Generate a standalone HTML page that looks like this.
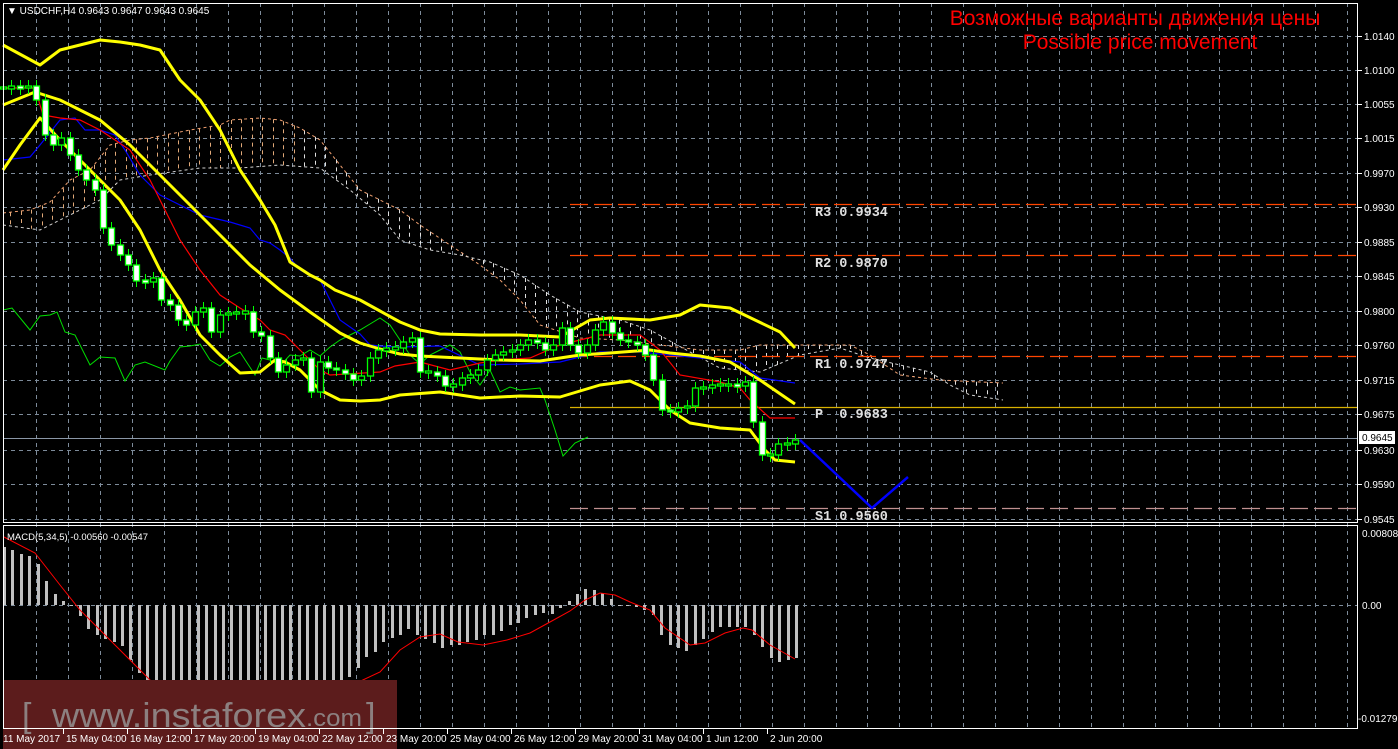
<!DOCTYPE html>
<html><head><meta charset="utf-8"><style>
html,body{margin:0;padding:0;background:#000;width:1398px;height:749px;overflow:hidden}
svg{display:block}
text{font-family:"Liberation Sans","DejaVu Sans",sans-serif}
</style></head><body>
<svg id="s" width="1398" height="749" xmlns="http://www.w3.org/2000/svg">
<rect width="1398" height="749" fill="#000"/>
<g id="grid"></g>
<g id="cloud"></g>
<g id="piv"></g>
<g id="lines"></g>
<g id="candles"></g>
<g id="macd"></g>
<g id="wm">
<rect x="3" y="680" width="394" height="69" fill="#5c1c1c"/>
<text x="22" y="727" font-size="34" fill="#8c8080">[</text>
<text x="52" y="727" font-size="34" fill="#8c8080" textLength="254" lengthAdjust="spacingAndGlyphs">www.instaforex</text>
<text x="306" y="726" font-size="24" fill="#8c8080" textLength="56" lengthAdjust="spacingAndGlyphs">.com</text>
<text x="366" y="727" font-size="34" fill="#8c8080">]</text>
</g>
<g id="fg"></g>
</svg>
<script>
var NS="http://www.w3.org/2000/svg";
function el(g,tag,a,txt){var e=document.createElementNS(NS,tag);for(var k in a)e.setAttribute(k,a[k]);if(txt!=null)e.textContent=txt;document.getElementById(g).appendChild(e);return e;}
function pts(a){return a.map(function(p){return p[0]+","+p[1]}).join(" ");}
var gc="#7d8b9a";
for(var x=36;x<1358;x+=31.98){el("grid","line",{x1:Math.round(x)+.5,y1:3,x2:Math.round(x)+.5,y2:729,stroke:gc,"stroke-dasharray":"4,4"});}
var hy=[36,70,104,138,173,207,242,276,311,345,380,414,450,484,519];
hy.forEach(function(y){el("grid","line",{x1:3,y1:y+.5,x2:1358,y2:y+.5,stroke:gc,"stroke-dasharray":"4,4"});});
el("grid","line",{x1:3,y1:605.5,x2:1358,y2:605.5,stroke:gc,"stroke-dasharray":"4,4"});
var up=[[3,213],[30,210],[50,202],[70,180],[90,170],[110,145],[130,140],[150,138],[165,135],[190,130],[220,125],[230,120],[260,118],[280,120],[300,128],[320,140],[340,165],[360,190],[380,200],[400,210],[420,225],[450,245],[480,265],[500,280],[520,300],[540,325],[580,338],[620,340],[660,345],[700,350],[740,350],[760,345],[800,345],[850,345],[870,355],[900,375],[940,380],[980,382],[1003,383]];
var lo=[[3,225],[40,230],[60,220],[80,210],[100,200],[120,180],[150,175],[200,168],[240,168],[280,165],[320,168],[350,190],[380,215],[400,240],[430,250],[460,255],[490,262],[520,275],[550,295],[580,312],[620,320],[650,330],[690,352],[720,368],[760,372],[800,355],[840,348],[870,358],[900,365],[930,372],[950,385],[970,395],[1003,400]];
function interp(a,x){for(var i=0;i<a.length-1;i++){if(x>=a[i][0]&&x<=a[i+1][0]){var t=(x-a[i][0])/(a[i+1][0]-a[i][0]);return a[i][1]+t*(a[i+1][1]-a[i][1]);}}return a[a.length-1][1];}
for(var x=10;x<1003;x+=10.5){var a=interp(up,x),b=interp(lo,x);el("cloud","line",{x1:Math.round(x)+.5,y1:Math.min(a,b),x2:Math.round(x)+.5,y2:Math.max(a,b),stroke:(x<300?"#e0a878":"#e0e0e0"),"stroke-dasharray":"4,4","stroke-width":1});}
el("cloud","polyline",{points:pts(up),fill:"none",stroke:"#f0a070","stroke-dasharray":"3,3"});
el("cloud","polyline",{points:pts(lo),fill:"none",stroke:"#d0d0d0","stroke-dasharray":"3,3"});
function pl(y,c,d){el("piv","line",{x1:570,y1:y+.5,x2:1358,y2:y+.5,stroke:c,"stroke-width":1.3,"stroke-dasharray":d});}
pl(204,"#ff4500","18,6");pl(255,"#ff4500","18,6");pl(356,"#ff4500","18,6");pl(407,"#d8b000","");pl(508,"#c09090","18,6");
el("piv","line",{x1:3,y1:438.5,x2:1358,y2:438.5,stroke:"#8a96a6"});
var lb=[["R3 0.9934",216],["R2 0.9870",267],["R1 0.9747",368],["P  0.9683",418],["S1 0.9560",520]];
lb.forEach(function(l){el("piv","text",{x:815,y:l[1],"xml:space":"preserve",style:"font-family:'Liberation Mono',monospace;font-size:13.5px;font-weight:bold;fill:#e0e0e0;white-space:pre"},l[0]);});
var ub=[[3,45],[40,65],[60,50],[100,40],[120,42],[140,45],[160,50],[180,80],[200,100],[220,130],[240,170],[260,200],[275,225],[290,262],[310,275],[320,280],[335,290],[360,300],[380,311],[400,322],[420,330],[440,334],[480,335],[520,335],[560,337],[590,320],[610,318],[650,320],[680,315],[700,305],[730,308],[755,320],[780,332],[795,348]];
var mb=[[3,105],[35,92],[60,100],[80,110],[100,120],[130,145],[160,175],[190,205],[220,235],[250,265],[280,290],[310,312],[340,333],[360,343],[380,349],[400,354],[420,356],[460,358],[500,360],[540,361],[580,355],[610,353],[650,350],[670,353],[700,356],[730,362],[760,380],[795,404]];
var lb2=[[3,170],[20,145],[40,118],[60,140],[80,160],[100,180],[120,200],[140,230],[160,270],[180,300],[200,335],[220,355],[240,373],[260,372],[275,360],[285,362],[300,370],[320,390],[340,400],[360,401],[380,400],[400,395],[440,392],[480,398],[520,396],[560,397],[600,385],[630,381],[650,390],[670,410],[690,423],[720,428],[750,430],[765,450],[775,460],[795,462]];
var red=[[3,88],[35,88],[43,115],[60,118],[80,120],[100,130],[130,150],[150,180],[170,220],[180,240],[200,270],[220,295],[240,308],[260,320],[270,330],[285,335],[300,350],[310,360],[320,370],[330,375],[380,372],[395,366],[420,362],[450,370],[480,363],[500,360],[530,358],[560,345],[580,340],[600,335],[640,335],[660,350],[680,375],[720,382],[740,388],[750,400],[770,418],[795,418]];
var blue=[[3,160],[30,157],[40,145],[60,120],[75,118],[85,130],[100,130],[115,135],[125,150],[140,175],[160,195],[180,205],[200,215],[230,222],[250,228],[260,240],[270,243],[280,250],[290,258],[300,270],[320,280],[340,320],[360,334],[370,345],[380,346],[400,347],[440,346],[480,365],[520,364],[560,362],[600,352],[640,352],[660,354],[690,357],[740,362],[760,378],[795,383]];
var grn=[[3,310],[12,308],[30,330],[40,316],[50,315],[57,312],[65,332],[75,335],[90,365],[100,357],[115,358],[125,381],[135,365],[145,362],[165,370],[170,361],[180,347],[190,346],[200,344],[210,360],[220,366],[230,357],[240,352],[255,375],[262,358],[270,360],[280,366],[290,355],[300,356],[310,350],[320,356],[330,347],[340,340],[350,335],[360,330],[370,324],[380,318],[390,325],[400,340],[410,355],[420,364],[430,355],[440,350],[450,345],[460,352],[470,372],[480,385],[490,370],[500,392],[510,387],[520,390],[540,388],[545,400],[555,430],[563,456],[575,443],[588,437]];
el("lines","polyline",{points:pts(grn),fill:"none",stroke:"#00e000","stroke-width":1});
el("lines","polyline",{points:pts(blue),fill:"none",stroke:"#0000ff","stroke-width":1.2});
el("lines","polyline",{points:pts(red),fill:"none",stroke:"#ff0000","stroke-width":1.2});
[ub,mb,lb2].forEach(function(a){el("lines","polyline",{points:pts(a),fill:"none",stroke:"#ffff00","stroke-width":3,"stroke-linejoin":"round"});});
el("lines","polyline",{points:"800,440 872,508 908,477",fill:"none",stroke:"#0000ff","stroke-width":2.5});
var cl=[88,87,88,86,100,135,145,138,155,170,180,190,228,245,255,265,281,282,278,300,305,320,325,312,308,332,315,313,313,312,332,336,358,372,365,360,358,392,362,368,370,374,380,376,358,350,349,348,342,338,372,372,376,386,385,378,375,370,360,355,352,350,345,340,343,350,345,328,345,353,345,330,322,333,340,342,345,355,380,410,412,408,406,388,388,385,385,385,386,382,422,455,455,444,444,440];
var n=cl.length,stp=792/(n-1),prev=88;
for(var i=0;i<n;i++){var x=Math.round(3+stp*i),o=prev,c=cl[i];var t=Math.min(o,c),b=Math.max(o,c);if(b-t<2){t-=1;b+=1;}
el("candles","line",{x1:x+.5,y1:t-6,x2:x+.5,y2:b+6,stroke:"#00ff00"});
el("candles","rect",{x:x-2.5,y:t,width:6,height:b-t,fill:(c>o?"#fff":"#000"),stroke:"#00ff00","stroke-width":1.3});
prev=c;}
var h=[547,550,554,556,564,581,594,601,605,616,629,635,639,642,646,660,673,685,695,700,704,705,705,704,703,702,700,699,697,695,693,690,687,690,697,695,690,688,687,684,680,677,668,657,652,642,638,635,629,635,639,643,648,645,645,642,640,635,635,631,625,623,618,615,613,614,608,601,594,589,590,593,599,605,605,607,610,615,635,645,648,651,645,639,632,627,627,627,627,635,647,658,662,660,658];
var hs=792/(h.length-1);
for(var i=0;i<h.length;i++){var x=Math.round(4+hs*i);var t=Math.min(h[i],605),b=Math.max(h[i],605);el("macd","rect",{x:x-1,y:t,width:3,height:Math.max(b-t,1),fill:"#c0c0c0"});}
var sig=[[4,537],[35,553],[60,585],[80,610],[100,630],[120,650],[150,680],[175,700],[200,710],[220,712],[250,705],[280,692],[320,690],[350,686],[380,672],[400,650],[420,637],[440,634],[458,642],[483,645],[507,640],[530,633],[550,622],[570,611],[585,600],[600,593],[615,595],[630,602],[650,610],[665,628],[690,645],[705,643],[725,633],[743,628],[752,630],[770,645],[795,659]];
el("macd","polyline",{points:pts(sig),fill:"none",stroke:"#ff0000","stroke-width":1});
el("fg","rect",{x:3.5,y:3.5,width:1354,height:519,fill:"none",stroke:"#fff"});
el("fg","rect",{x:3.5,y:525.5,width:1354,height:203,fill:"none",stroke:"#fff"});
var pl2=["1.0140","1.0100","1.0055","1.0015","0.9970","0.9930","0.9885","0.9845","0.9800","0.9760","0.9715","0.9675","0.9630","0.9590","0.9545"];
hy.forEach(function(y,i){el("fg","line",{x1:1358,y1:y+.5,x2:1362,y2:y+.5,stroke:"#fff"});el("fg","text",{x:1364,y:y+4,"font-size":10,fill:"#fff"},pl2[i]);});
el("fg","rect",{x:1359,y:431,width:36,height:13,fill:"#fff"});
el("fg","text",{x:1362,y:441,"font-size":10,fill:"#000"},"0.9645");
el("fg","text",{x:1362,y:537,"font-size":10,fill:"#fff"},"0.00808");
el("fg","text",{x:1362,y:609,"font-size":10,fill:"#fff"},"0.00");
el("fg","text",{x:1358,y:722,"font-size":10,fill:"#fff"},"-0.01279");
var tl=["11 May 2017","15 May 04:00","16 May 12:00","17 May 20:00","19 May 04:00","22 May 12:00","23 May 20:00","25 May 04:00","26 May 12:00","29 May 20:00","31 May 04:00","1 Jun 12:00","2 Jun 20:00"];
tl.forEach(function(t,i){var x=(i==0?3:66+64*(i-1));if(i>0)el("fg","line",{x1:x-2.5,y1:729,x2:x-2.5,y2:734,stroke:"#fff"});el("fg","text",{x:x,y:742,"font-size":10,fill:"#fff"},t);});
el("fg","text",{x:7,y:14,"font-size":10,fill:"#fff","xml:space":"preserve"},"▼ USDCHF,H4  0.9643 0.9647 0.9643 0.9645");
el("fg","text",{x:7,y:540,"font-size":9.5,fill:"#fff"},"MACD(5,34,5) -0.00560 -0.00547");
el("fg","text",{x:1135,y:25,"font-size":21,fill:"#ff0000","text-anchor":"middle"},"Возможные варианты движения цены");
el("fg","text",{x:1140,y:49,"font-size":21,fill:"#ff0000","text-anchor":"middle"},"Possible price movement");
</script>
</body></html>
